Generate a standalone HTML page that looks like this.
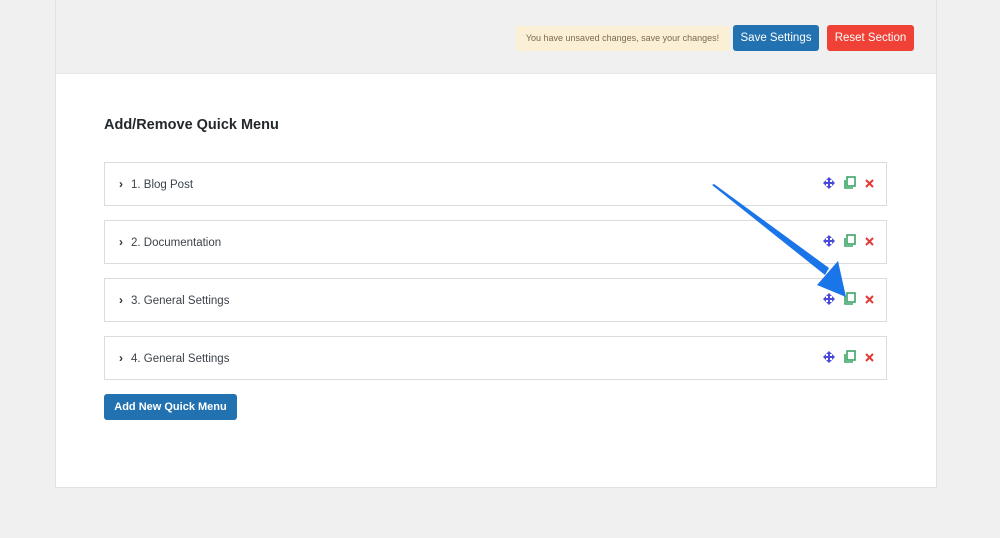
<!DOCTYPE html>
<html><head><style>
body{margin:0;width:1000px;height:538px;background:#f0f0f0;font-family:"Liberation Sans",sans-serif;position:relative;overflow:hidden}
.box{position:absolute;left:55px;top:-1px;width:880px;height:487px;border:1px solid #e2e2e2;background:#fff}
.hdr{position:absolute;left:0;top:0;width:880px;height:73px;background:#f0f0f0;border-bottom:1px solid #e6e6e6}
.notice{position:absolute;left:516px;top:26px;width:213px;height:25px;background:#fbefd5;color:#7a6a50;font-size:9px;line-height:25px;text-align:center}
.btn{position:absolute;color:#fff;font-size:11.5px;text-align:center;line-height:26px;border-radius:3px}
h2{position:absolute;left:104px;top:117px;margin:0;font-size:14.5px;color:#23282d;font-weight:bold}
.row{position:absolute;left:104px;width:781px;height:42px;border:1px solid #dcdcdc;background:#fff}
.row .t{position:absolute;left:14px;top:0;line-height:43px;font-size:11.5px;color:#3c434a}
.row .t b{display:inline-block;margin-right:8px;font-size:12px;color:#333}
</style></head><body>
<div class="box"><div class="hdr"></div></div>
<div class="notice">You have unsaved changes, save your changes!</div>
<div class="btn" style="left:733px;top:25px;width:86px;background:#2271b1">Save Settings</div>
<div class="btn" style="left:827px;top:25px;width:87px;background:#ef4136">Reset Section</div>
<h2>Add/Remove Quick Menu</h2>

<div class="row" style="top:162px"><div class="t"><b>›</b>1. Blog Post</div></div>
<div class="row" style="top:220px"><div class="t"><b>›</b>2. Documentation</div></div>
<div class="row" style="top:278px"><div class="t"><b>›</b>3. General Settings</div></div>
<div class="row" style="top:336px"><div class="t"><b>›</b>4. General Settings</div></div>

<svg width="1000" height="538" style="position:absolute;left:0;top:0">
<defs>
<g id="icons">
<g fill="#4a4ad8"><path d="M829 177l-3 3h2v2h-2v-2l-3 3 3 3v-2h2v2h-2l3 3 3-3h-2v-2h2v2l3-3-3-3v2h-2v-2h2z"/></g>
<rect x="847" y="177" width="8" height="9" fill="none" stroke="#3aa565" stroke-width="1.6"/>
<path d="M845 180v8h8" fill="none" stroke="#3aa565" stroke-width="1.6"/>
<path d="M866 180l7 7M873 180l-7 7" stroke="#e53935" stroke-width="2"/>
</g>
</defs>
<use href="#icons"/>
<use href="#icons" y="58"/>
<use href="#icons" y="116"/>
<use href="#icons" y="174"/>
<path d="M712 185L714 184 829 268 825 275Z" fill="#1a75e8"/>
<path d="M846 297L817 285 838 261Z" fill="#1a75e8"/>
</svg>
<div class="btn" style="left:104px;top:394px;width:133px;background:#2271b1;font-weight:bold;font-size:11px">Add New Quick Menu</div>
</body></html>
